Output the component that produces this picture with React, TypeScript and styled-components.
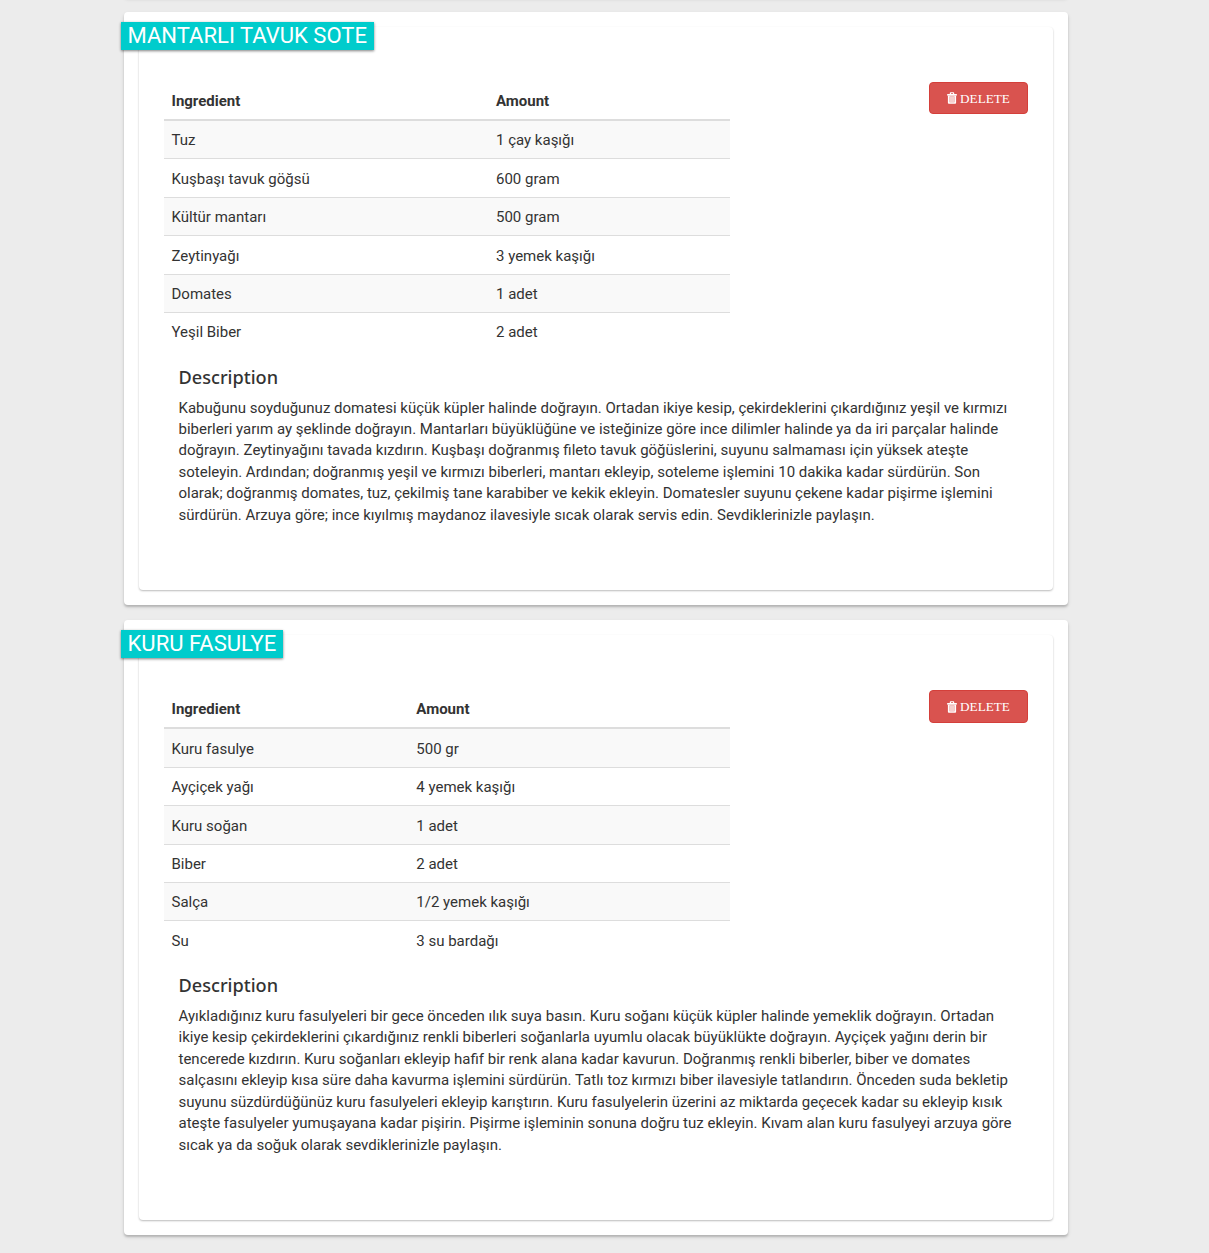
import React from "react";
import styled, { createGlobalStyle } from "styled-components";

const GlobalStyle = createGlobalStyle`
  * { box-sizing: border-box; }
  body {
    margin: 0;
    background: #ececec;
    color: #333;
    font: 15px/1.42857143 Roboto, "Noto Sans", sans-serif;
  }
`;

const Page = styled.main`
  display: flex;
  flex-direction: column;
  gap: 15px;
  width: 944px;
  height: 1253px;
  margin-left: 124px;
`;

const Card = styled.section`
  flex: none;
  padding: 15px;
  background: #fff;
  border-radius: 4px;
  box-shadow: 0 2px 2px 0 rgba(0, 0, 0, 0.17), 0 2px 4px 0 rgba(0, 0, 0, 0.1);
`;

const PreviousCard = styled(Card)`
  margin-top: -33.3px;
`;

const Panel = styled.div<{ $height: number }>`
  display: flow-root;
  height: ${(p) => p.$height}px;
  border-radius: 4px;
  background: #fff;
  box-shadow: 0 1px 2px 0 rgba(0, 0, 0, 0.27);
`;

const Title = styled.h2`
  width: max-content;
  height: 28px;
  margin: -5px 0 0 -18px;
  padding: 0 7px 0 6.5px;
  background: #00cccc;
  color: #fff;
  font-size: 22.05px;
  font-weight: 400;
  line-height: 28.6px;
  text-transform: uppercase;
  box-shadow: 0 1px 3px rgba(0, 0, 0, 0.3), 0 1px 2px rgba(0, 0, 0, 0.24);
`;

const Body = styled.div`
  display: flex;
  justify-content: space-between;
  align-items: flex-start;
  padding: 32px 25px 0 24.5px;
`;

const Table = styled.table`
  width: 566px;
  margin-top: -0.15px;
  border-collapse: collapse;
  border-spacing: 0;
`;

const HeadCell = styled.th`
  padding: 9.2px 8px 6.8px;
  border-bottom: 2px solid #ddd;
  text-align: left;
  font-weight: 700;
`;

const Row = styled.tr`
  &:nth-child(odd) { background: #f9f9f9; }
  & + & > td { border-top: 1px solid #ddd; }
`;

const Cell = styled.td`
  padding: 9.45px 8px 6.55px;
`;

const DeleteButton = styled.button`
  display: flex;
  align-items: center;
  justify-content: center;
  gap: 3px;
  width: 99px;
  height: 32.5px;
  padding: 1px 0 0;
  border: 1px solid #d43f3a;
  border-radius: 4px;
  background: #d9534f;
  color: #fff;
  font: 13.2px "Liberation Serif", serif;
`;

const ButtonLabel = styled.span`
  padding-top: 1px;
`;

const Description = styled.div`
  width: 835px;
  margin: 16.2px 0 0 39.5px;
`;

const Heading = styled.h3`
  margin: 0 0 11px;
  font: 500 18.15px/20px "Noto Sans", sans-serif;
`;

const Text = styled.p`
  margin: 0;
`;

const Trash = () => (
  <svg width="10" height="12" viewBox="0 0 10 12" fill="#fff" aria-hidden="true">
    <path d="M2.8 2V1Q2.8 .2 3.6 .2H6.4Q7.2 .2 7.2 1V2H9.2Q10 2 10 2.8V3.5H0V2.8Q0 2 .8 2ZM4 2H6V1.2H4Z" fillRule="evenodd" />
    <path d="M.9 3.5H9.1V10.8Q9.1 11.7 8.2 11.7H1.8Q.9 11.7 .9 10.8ZM2.5 4.6V10.2H7.5V4.6Z" fillRule="evenodd" />
    <path d="M2.5 4.6H7.5V10.2H2.5Z" opacity="0.72" />
  </svg>
);

interface Recipe {
  name: string;
  height: number;
  firstColumn: number;
  ingredients: [string, string][];
  text: string;
}

const FirstHeadCell = styled(HeadCell)<{ $width: number }>`
  width: ${(p) => p.$width}px;
`;

const recipes: Recipe[] = [
  {
    name: "Mantarli Tavuk Sote",
    height: 563.4,
    firstColumn: 324.5,
    ingredients: [
      ["Tuz", "1 çay kaşığı"],
      ["Kuşbaşı tavuk göğsü", "600 gram"],
      ["Kültür mantarı", "500 gram"],
      ["Zeytinyağı", "3 yemek kaşığı"],
      ["Domates", "1 adet"],
      ["Yeşil Biber", "2 adet"],
    ],
    text: "Kabuğunu soyduğunuz domatesi küçük küpler halinde doğrayın. Ortadan ikiye kesip, çekirdeklerini çıkardığınız yeşil ve kırmızı biberleri yarım ay şeklinde doğrayın. Mantarları büyüklüğüne ve isteğinize göre ince dilimler halinde ya da iri parçalar halinde doğrayın. Zeytinyağını tavada kızdırın. Kuşbaşı doğranmış fileto tavuk göğüslerini, suyunu salmaması için yüksek ateşte soteleyin. Ardından; doğranmış yeşil ve kırmızı biberleri, mantarı ekleyip, soteleme işlemini 10 dakika kadar sürdürün. Son olarak; doğranmış domates, tuz, çekilmiş tane karabiber ve kekik ekleyin. Domatesler suyunu çekene kadar pişirme işlemini sürdürün. Arzuya göre; ince kıyılmış maydanoz ilavesiyle sıcak olarak servis edin. Sevdiklerinizle paylaşın.",
  },
  {
    name: "Kuru Fasulye",
    height: 585,
    firstColumn: 244.8,
    ingredients: [
      ["Kuru fasulye", "500 gr"],
      ["Ayçiçek yağı", "4 yemek kaşığı"],
      ["Kuru soğan", "1 adet"],
      ["Biber", "2 adet"],
      ["Salça", "1/2 yemek kaşığı"],
      ["Su", "3 su bardağı"],
    ],
    text: "Ayıkladığınız kuru fasulyeleri bir gece önceden ılık suya basın. Kuru soğanı küçük küpler halinde yemeklik doğrayın. Ortadan ikiye kesip çekirdeklerini çıkardığınız renkli biberleri soğanlarla uyumlu olacak büyüklükte doğrayın. Ayçiçek yağını derin bir tencerede kızdırın. Kuru soğanları ekleyip hafif bir renk alana kadar kavurun. Doğranmış renkli biberler, biber ve domates salçasını ekleyip kısa süre daha kavurma işlemini sürdürün. Tatlı toz kırmızı biber ilavesiyle tatlandırın. Önceden suda bekletip suyunu süzdürdüğünüz kuru fasulyeleri ekleyip karıştırın. Kuru fasulyelerin üzerini az miktarda geçecek kadar su ekleyip kısık ateşte fasulyeler yumuşayana kadar pişirin. Pişirme işleminin sonuna doğru tuz ekleyin. Kıvam alan kuru fasulyeyi arzuya göre sıcak ya da soğuk olarak sevdiklerinizle paylaşın.",
  },
];

const RecipeCard = ({ recipe }: { recipe: Recipe }) => (
  <Card>
    <Panel $height={recipe.height}>
      <Title>{recipe.name}</Title>
      <Body>
        <Table>
          <thead>
            <tr>
              <FirstHeadCell $width={recipe.firstColumn}>Ingredient</FirstHeadCell>
              <HeadCell>Amount</HeadCell>
            </tr>
          </thead>
          <tbody>
            {recipe.ingredients.map(([name, amount]) => (
              <Row key={name}>
                <Cell>{name}</Cell>
                <Cell>{amount}</Cell>
              </Row>
            ))}
          </tbody>
        </Table>
        <DeleteButton>
          <Trash />
          <ButtonLabel>DELETE</ButtonLabel>
        </DeleteButton>
      </Body>
      <Description>
        <Heading>Description</Heading>
        <Text>{recipe.text}</Text>
      </Description>
    </Panel>
  </Card>
);

export default function App() {
  return (
    <>
      <GlobalStyle />
      <Page>
        <PreviousCard />
        {recipes.map((recipe) => (
          <RecipeCard key={recipe.name} recipe={recipe} />
        ))}
      </Page>
    </>
  );
}
